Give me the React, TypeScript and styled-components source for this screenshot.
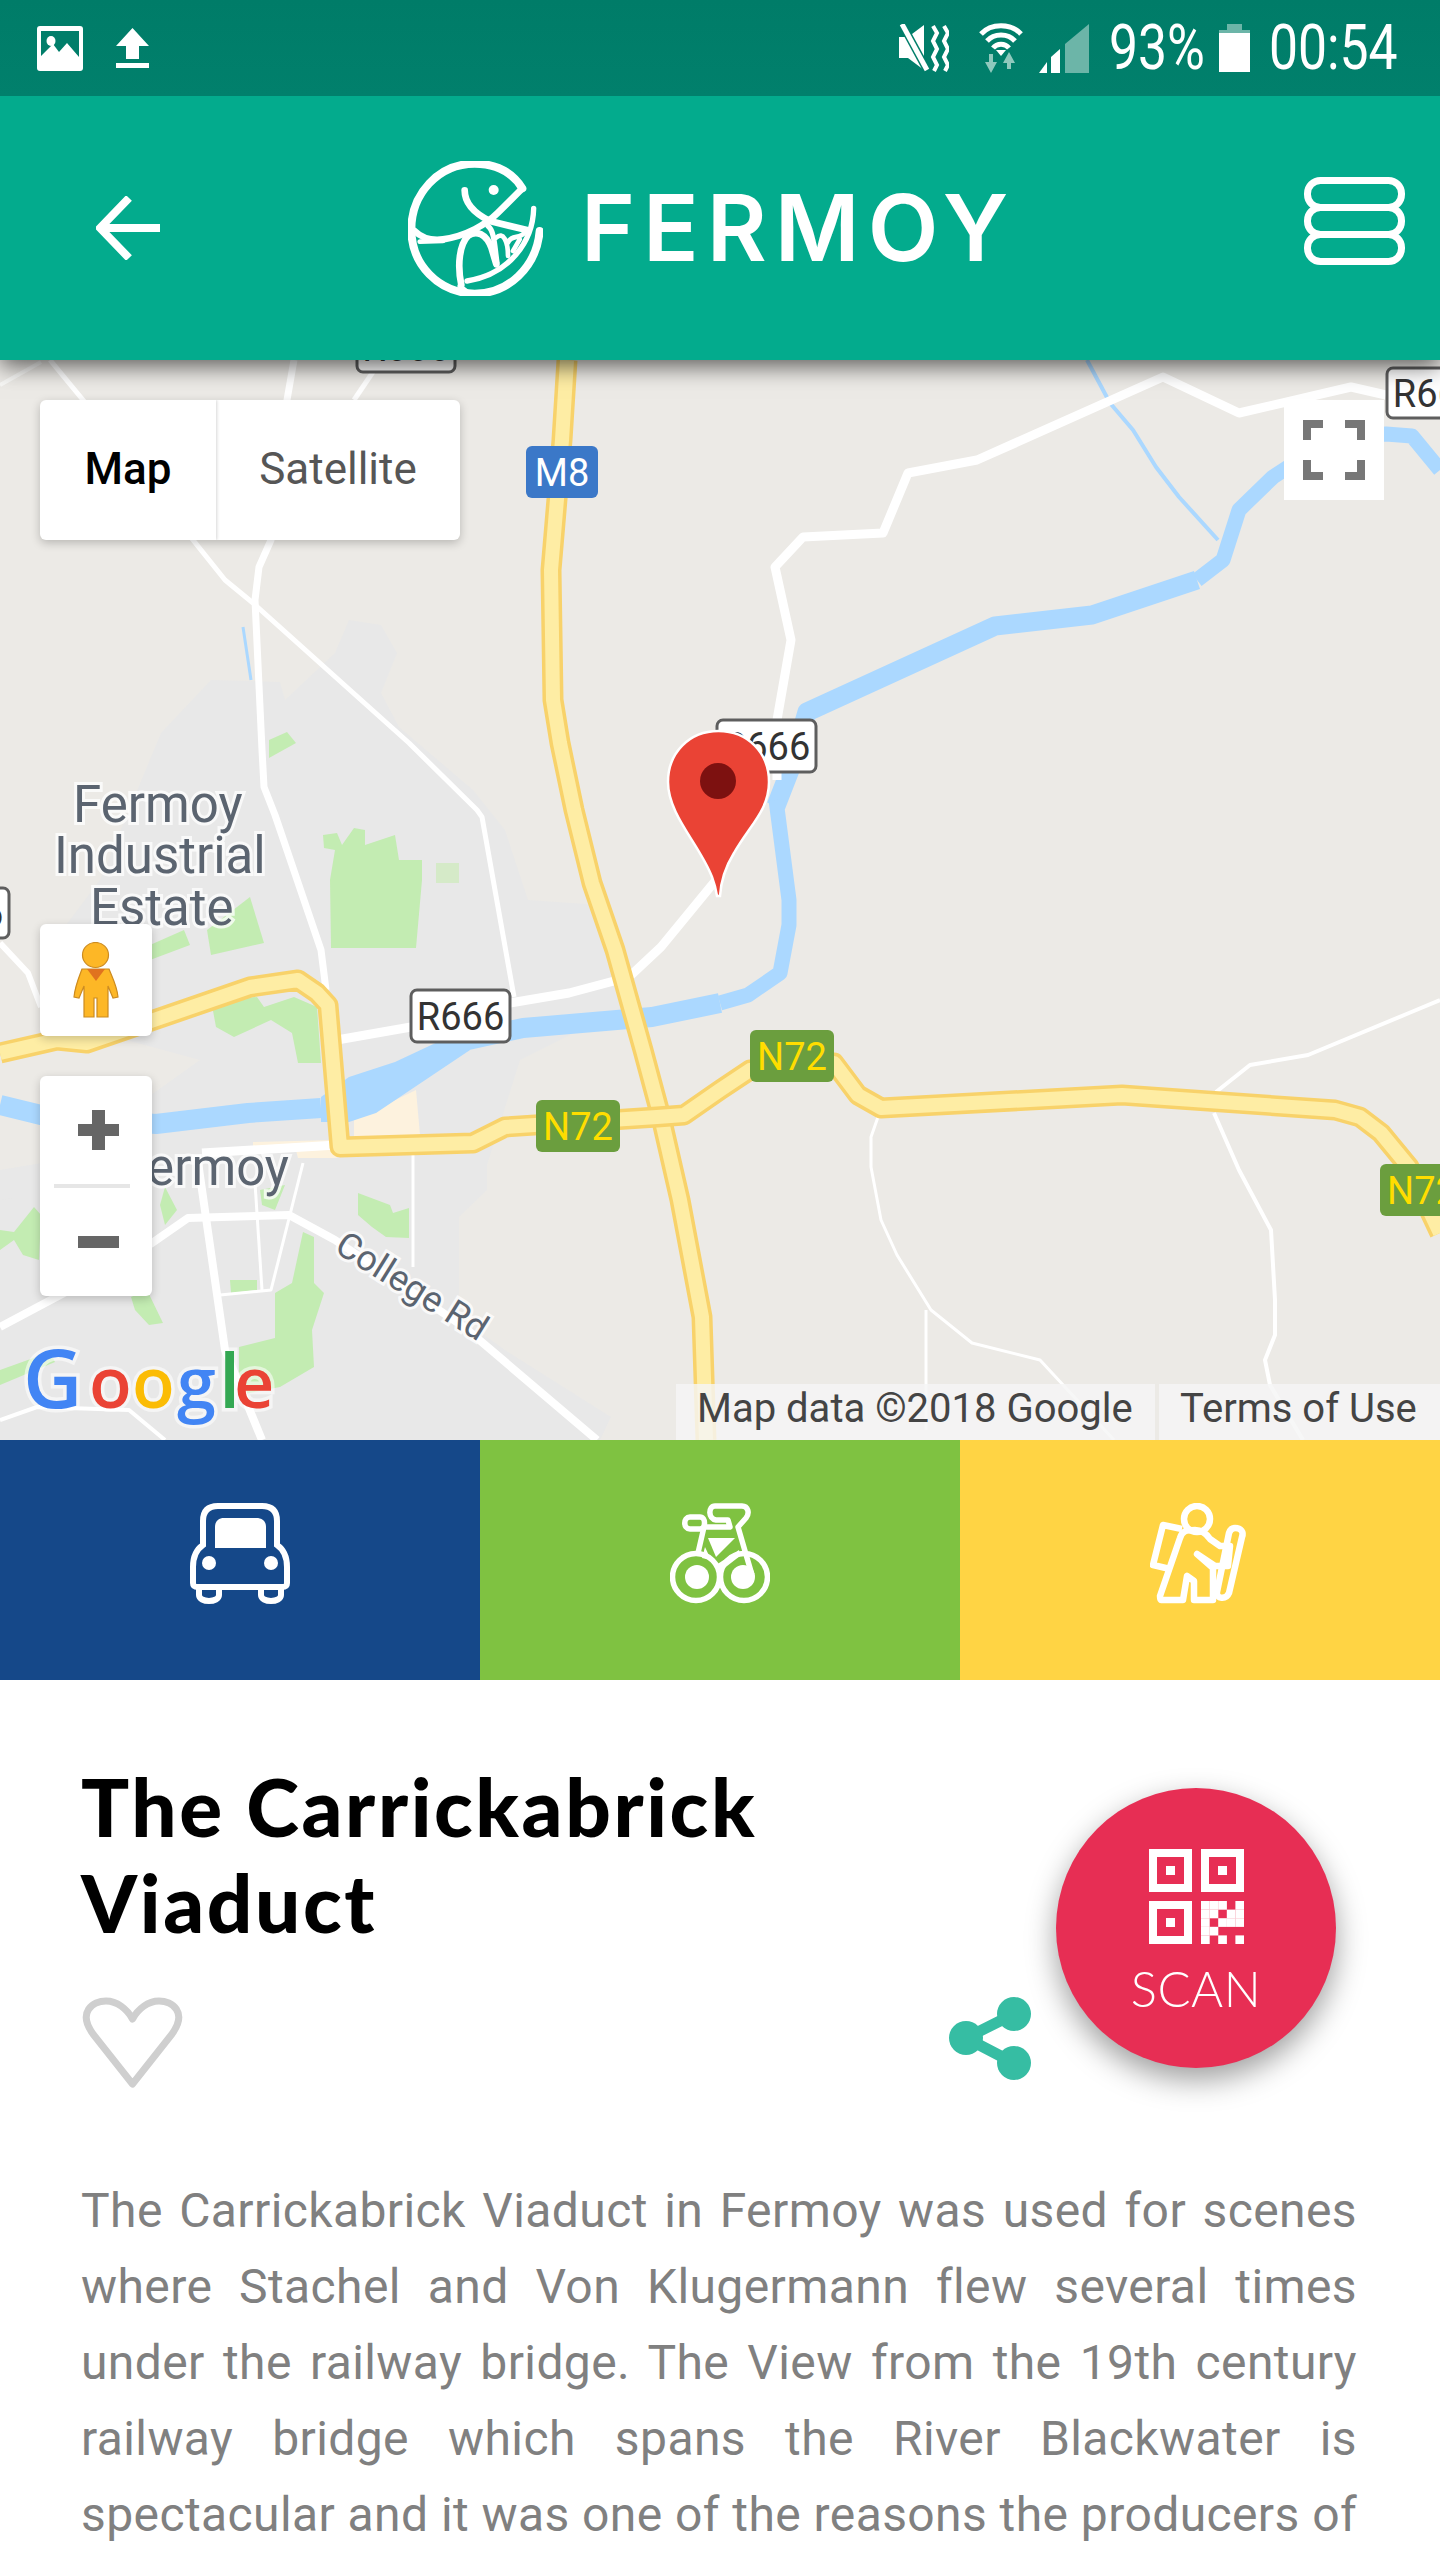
import React from "react";
import styled, { createGlobalStyle } from "styled-components";

const Global = createGlobalStyle`
  html, body { margin: 0; padding: 0; background: #fff; }
  body { font-family: Roboto, "Liberation Sans", sans-serif; }
`;

const Page = styled.div`
  width: 1440px;
  height: 2560px;
  overflow: hidden;
  background: #fff;
`;

const StatusBar = styled.div`
  height: 96px;
  background: linear-gradient(#007c68, #01806c);
  display: flex;
  align-items: center;
  padding: 0 42px 0 37px;
  color: #fff;
  position: relative;
  z-index: 3;
`;
const StatusLeft = styled.div`
  display: flex;
  align-items: center;
  gap: 33px;
`;
const StatusRight = styled.div`
  margin-left: auto;
  display: flex;
  align-items: center;
`;
const StatusSlot = styled.div<{ $gap?: number }>`
  margin-left: ${(p) => p.$gap ?? 0}px;
`;
const StatusText = styled.span<{ $w: number }>`
  display: block;
  width: ${(p) => p.$w}px;
  font: 400 63px/60px Roboto, sans-serif;
  white-space: nowrap;
  transform: scaleX(0.82);
  transform-origin: left center;
`;
const Glyph = styled.svg`
  display: block;
  flex: none;
`;

const Header = styled.header`
  height: 264px;
  background: #03ab8d;
  display: flex;
  align-items: center;
  padding: 0 35px 0 96px;
  position: relative;
  z-index: 2;
  box-shadow: 0 6px 22px rgba(0, 0, 0, 0.62);
`;
const Brand = styled.div`
  display: flex;
  align-items: center;
  gap: 38px;
  margin-left: 248px;
`;
const BrandName = styled.span`
  font: 600 92px/92px Inter, sans-serif;
  letter-spacing: 8px;
  color: #fff;
`;
const MenuSlot = styled.div`
  margin-left: auto;
  margin-bottom: 14px;
`;

const MapArea = styled.section`
  position: relative;
  height: 1080px;
  overflow: hidden;
  background: #eceae6;
`;
const MapDrawing = styled.svg`
  display: block;
`;
const PlaceLabel = styled.text<{ $size?: number }>`
  font: 400 ${(p) => p.$size ?? 51}px Roboto, sans-serif;
  fill: #5b6470;
  stroke: rgba(255, 255, 255, 0.75);
  stroke-width: 6px;
  paint-order: stroke;
`;
const ShieldText = styled.text`
  font: 400 38px Roboto, sans-serif;
  text-anchor: middle;
`;
const GoogleLetter = styled.text<{ $size: number }>`
  font: 600 ${(p) => p.$size}px "Open Sans", sans-serif;
  stroke: rgba(255, 255, 255, 0.55);
  stroke-width: 7px;
  paint-order: stroke;
`;

const TypeSwitch = styled.div`
  position: absolute;
  left: 40px;
  top: 40px;
  width: 420px;
  height: 140px;
  display: flex;
  background: #fff;
  border-radius: 6px;
  box-shadow: 0 3px 10px rgba(0, 0, 0, 0.22);
  overflow: hidden;
`;
const TypeOption = styled.div<{ $active?: boolean; $w: number }>`
  width: ${(p) => p.$w}px;
  display: flex;
  align-items: center;
  justify-content: center;
  padding-bottom: 3px;
  box-sizing: border-box;
  font: ${(p) => (p.$active ? 500 : 400)} 44px Roboto, sans-serif;
  color: ${(p) => (p.$active ? "#000" : "#565656")};
  box-shadow: ${(p) => (p.$active ? "1px 0 3px rgba(0,0,0,.16)" : "none")};
`;
const FullscreenButton = styled.div`
  position: absolute;
  left: 1284px;
  top: 40px;
  width: 100px;
  height: 100px;
  background: #fff;
  display: flex;
  align-items: center;
  justify-content: center;
`;
const RailColumn = styled.div`
  position: absolute;
  left: 40px;
  top: 564px;
  width: 112px;
  display: flex;
  flex-direction: column;
  gap: 40px;
`;
const RailCard = styled.div`
  background: #fff;
  border-radius: 6px;
  box-shadow: 0 3px 10px rgba(0, 0, 0, 0.2);
`;
const PegmanCard = styled(RailCard)`
  height: 112px;
  display: flex;
  align-items: center;
  justify-content: center;
`;
const ZoomCard = styled(RailCard)`
  height: 220px;
  display: flex;
  flex-direction: column;
  align-items: center;
`;
const ZoomCell = styled.div`
  height: 108px;
  width: 100%;
  display: flex;
  align-items: center;
  justify-content: center;
  padding-left: 4px;
  box-sizing: border-box;
`;
const ZoomRule = styled.div`
  width: 76px;
  height: 4px;
  background: #e6e6e6;
  margin-left: -8px;
`;
const Attribution = styled.div`
  position: absolute;
  right: 0;
  bottom: 0;
  height: 56px;
  display: flex;
  gap: 4px;
`;
const AttributionItem = styled.div<{ $w: number; $pad: number }>`
  width: ${(p) => p.$w}px;
  box-sizing: border-box;
  padding-left: ${(p) => p.$pad}px;
  background: rgba(245, 245, 245, 0.82);
  font: 400 40px/50px Roboto, sans-serif;
  color: #444;
  white-space: nowrap;
`;

const Transport = styled.nav`
  display: grid;
  grid-template-columns: repeat(3, 480px);
  height: 240px;
`;
const TransportCell = styled.div<{ $bg: string }>`
  background: ${(p) => p.$bg};
  display: flex;
  align-items: center;
  justify-content: center;
  padding-bottom: 13px;
  box-sizing: border-box;
`;

const Detail = styled.article`
  position: relative;
  padding: 78px 80px 0 81px;
`;
const Title = styled.h1`
  margin: 0;
  width: 780px;
  font: 900 80px/96px Lato, sans-serif;
  letter-spacing: 2.6px;
  color: #000;
`;
const Actions = styled.div`
  display: flex;
  align-items: flex-start;
  margin-top: 47px;
  width: 951px;
  justify-content: space-between;
  margin-left: -1px;
`;
const ScanButton = styled.div`
  position: absolute;
  left: 1056px;
  top: 108px;
  width: 280px;
  height: 280px;
  border-radius: 50%;
  background: #e72e54;
  box-shadow: 0 12px 30px rgba(0, 0, 0, 0.38);
  color: #fff;
  display: flex;
  flex-direction: column;
  align-items: center;
  padding-top: 61px;
  box-sizing: border-box;
`;
const ScanLabel = styled.span`
  font: 300 49px/50px Lato, sans-serif;
  margin-top: 19px;
  letter-spacing: 0.5px;
`;
const Body = styled.p`
  margin: 85px 0 0;
  width: 1276px;
  font: 400 48px/76px Roboto, sans-serif;
  letter-spacing: 0.4px;
  color: #808080;
  text-align: justify;
  text-align-last: justify;
`;

const Road = ({ d, w = 8, c = "#fff", o }: { d: string; w?: number; c?: string; o?: number }) => (
  <path d={d} fill="none" stroke={c} strokeWidth={w} strokeLinejoin="round" opacity={o} />
);

const Highway = ({ d }: { d: string }) => (
  <>
    <path d={d} fill="none" stroke="#f8d26a" strokeWidth={21} strokeLinejoin="round" />
    <path d={d} fill="none" stroke="#feeda4" strokeWidth={14} strokeLinejoin="round" />
  </>
);

const Area = ({ p, c }: { p: string; c: string }) => <polygon points={p} fill={c} />;

const Shield = ({ x, y, w, h = 52, t, variant }: { x: number; y: number; w: number; h?: number; t: string; variant: "r" | "m" | "n" }) => {
  const fill = variant === "r" ? "#fff" : variant === "m" ? "#3b78c8" : "#6b9e3e";
  const text = variant === "r" ? "#333" : variant === "m" ? "#fff" : "#ffdd00";
  return (
    <g>
      <rect
        x={x}
        y={y}
        width={w}
        height={h}
        rx={6}
        fill={fill}
        stroke={variant === "r" ? "#5e5e5e" : "none"}
        strokeWidth={variant === "r" ? 3 : 0}
      />
      <ShieldText x={x + w / 2} y={y + h / 2 + 14} fill={text} fontWeight={variant === "r" ? 400 : 500}>
        {t}
      </ShieldText>
    </g>
  );
};

const GREEN = "#c3ecb2";
const WATER = "#abd8ff";

const MapArt = () => (
  <MapDrawing width={1440} height={1080} viewBox="0 360 1440 1080">
    <rect x={0} y={360} width={1440} height={1080} fill="#eceae6" />
    <Area
      c="#e8e8e8"
      p="161,733 211,680 280,682 285,700 335,653 349,620 381,625 397,653 381,693 399,727 473,790 505,830 528,900 600,905 625,960 640,1000 520,1060 487,1165 487,1190 459,1217 459,1317 505,1350 611,1417 600,1440 300,1440 285,1390 399,1353 200,1440 0,1440 0,1170 60,1160 200,1060 90,1030 40,960 100,880"
    />
    <Area c="#e8e8e8" p="0,1200 300,1150 300,1440 0,1440" />
    <Area c={GREEN} p="269,740 287,732 296,743 269,758" />
    <Area c={GREEN} p="323,835 337,833 342,845 354,828 365,830 365,845 395,835 399,860 422,860 422,880 416,948 331,948 330,880 335,850 324,848" />
    <Area c="#d5eac8" p="436,863 459,863 459,883 436,883" />
    <Area c={GREEN} p="207,930 250,897 264,943 211,955" />
    <Area c={GREEN} p="150,945 184,930 190,945 150,960" />
    <Area c={GREEN} p="211,1000 257,997 264,1007 294,997 317,1007 321,1063 298,1063 292,1033 271,1020 234,1037 216,1027" />
    <Area c="#fdf2de" p="354,1120 416,1090 420,1135 354,1143" />
    <Area c="#fdf2de" p="253,1142 335,1140 337,1158 298,1158 296,1150 253,1150" />
    <Area c={GREEN} p="358,1193 390,1205 393,1213 409,1208 409,1238 386,1237 372,1227 358,1215" />
    <Area c={GREEN} p="303,1232 314,1237 314,1283 324,1293 312,1330 314,1367 280,1387 239,1395 239,1347 275,1338 275,1293 292,1283" />
    <Area c={GREEN} p="230,1280 257,1280 257,1290 231,1293" />
    <Area c={GREEN} p="131,1297 147,1290 163,1323 149,1325 135,1310" />
    <Area c={GREEN} p="0,1230 14,1232 34,1207 41,1215 39,1260 23,1255 14,1240 0,1250" />
    <Area c={GREEN} p="165,1187 177,1210 165,1225 160,1205" />
    <Area c={GREEN} p="260,1190 285,1185 275,1210 262,1205" />
    <Area c={GREEN} p="0,1370 50,1352 55,1362 0,1385" />

    <Road c={WATER} w={4} d="M1087 360 L1110 403 L1133 430 L1156 467 L1179 497 L1218 540" />
    <Road c={WATER} w={3} d="M243 627 L251 680" />
    <Road c={WATER} w={15} d="M1440 470 L1412 436 L1386 434 L1330 440 L1273 477 L1239 510 L1223 560 L1197 580" />
    <Road c={WATER} w={19} d="M1197 580 L1092 615 L995 626 L807 712 L790 770 L776 806" />
    <Road c={WATER} w={15} d="M776 800 L789 900 L789 925 L780 973 L748 995 L720 1003" />
    <Road c={WATER} w={20} d="M720 1003 L652 1017 L523 1028 L459 1042" />
    <Road c={WATER} w={20} d="M321 1108 L248 1113 L156 1124 L41 1115 L0 1105" />
    <polygon points="459,1032 395,1062 349,1077 321,1097 321,1122 349,1122 376,1113 470,1050" fill={WATER} />

    <Road w={9} d="M1386 395 L1351 387 L1239 413 L1163 377 L977 460 L908 473 L883 533 L803 537 L775 567 L791 640 L777 720 L777 780" />
    <Road w={9} d="M716 880 L661 947 L629 977 L569 993 L510 1003 L411 1027 L337 1040" />
    <Road w={5} d="M50 360 L83 400 L193 540 L225 580 L253 603 L409 743 L477 810 L482 817 L514 997" />
    <Road w={7} d="M294 360 L287 400 L271 540 L259 567 L255 600 L262 750 L264 787 L275 815 L321 950 L326 990" />
    <Road w={5} d="M381 360 L354 400" />
    <Road w={4} d="M0 385 L41 362" o={0.6} />
    <Road w={6} d="M0 943 L28 973 L41 1007" />
    <Road w={9} d="M202 1153 L337 1145" />
    <Road w={8} d="M0 1327 L64 1293 L152 1243 L188 1218 L289 1215 L335 1240 L464 1327 L597 1440" />
    <Road w={8} d="M197 1155 L225 1350 L262 1440" />
    <Road w={3} d="M255 1183 L262 1290" />
    <Road w={3} d="M303 1163 L271 1290 L220 1295" />
    <Road w={3} d="M413 1155 L413 1267" />
    <Road w={4} d="M0 1420 L37 1407 L129 1410 L165 1440" />
    <Road w={3} d="M878 1117 L871 1137 L871 1167 L881 1220 L897 1255 L931 1310 L972 1343 L1040 1360 L1114 1440" />
    <Road w={3} d="M926 1310 L926 1430" />
    <Road w={4} d="M1216 1092 L1250 1065 L1308 1055 L1409 1013 L1440 1000" />
    <Road w={4} d="M1214 1113 L1239 1170 L1271 1230 L1275 1300 L1275 1335 L1265 1360 L1270 1385 L1303 1440" />

    <Highway d="M567 360 L562 440 L551 570 L553 700 L560 743 L574 810 L592 883 L615 950 L643 1050 L661 1117 L680 1200 L702 1317 L706 1440" />
    <Highway d="M0 1053 L57 1040 L87 1043 L250 987 L298 980 L317 993 L328 1005 L340 1147 L473 1143 L505 1127 L657 1117 L684 1115 L720 1090 L750 1070 L834 1063 L858 1095 L881 1108 L1122 1095 L1335 1110 L1360 1117 L1381 1133 L1409 1167 L1440 1233" />

    <PlaceLabel x={73} y={822}>Fermoy</PlaceLabel>
    <PlaceLabel x={54} y={873}>Industrial</PlaceLabel>
    <PlaceLabel x={90} y={925}>Estate</PlaceLabel>
    <PlaceLabel x={289} y={1185} textAnchor="end">Fermoy</PlaceLabel>
    <PlaceLabel $size={36} transform="translate(333 1251) rotate(32)">College Rd</PlaceLabel>

    <Shield x={411} y={990} w={99} t="R666" variant="r" />
    <Shield x={717} y={720} w={99} t="R666" variant="r" />
    <Shield x={1387} y={368} w={99} h={50} t="R666" variant="r" />
    <Shield x={-90} y={888} w={99} h={50} t="R666" variant="r" />
    <Shield x={357} y={322} w={98} h={50} t="R666" variant="r" />
    <Shield x={526} y={446} w={72} t="M8" variant="m" />
    <Shield x={536} y={1100} w={84} t="N72" variant="n" />
    <Shield x={750} y={1030} w={84} t="N72" variant="n" />
    <Shield x={1380} y={1164} w={84} t="N72" variant="n" />

    <path
      d="M718.5 731 C689 731 668 753 668 782 C668 815 700 845 712 877 C715 885 716 890 717 896 L720 896 C721 880 726 866 734 853 C750 825 769 810 769 782 C769 753 748 731 718.5 731Z"
      fill="#ea4335"
      stroke="#fff"
      strokeWidth={2.5}
    />
    <ellipse cx={718} cy={781} rx={18} ry={18} fill="#7d1110" />

    <GoogleLetter $size={82} x={23} y={1408} fill="#4285f4">G</GoogleLetter>
    <GoogleLetter $size={70} x={89} y={1408} fill="#ea4335">o</GoogleLetter>
    <GoogleLetter $size={70} x={132} y={1408} fill="#fbbc05">o</GoogleLetter>
    <GoogleLetter $size={70} x={177} y={1408} fill="#4285f4">g</GoogleLetter>
    <GoogleLetter $size={76} x={219} y={1408} fill="#34a853">l</GoogleLetter>
    <GoogleLetter $size={70} x={234} y={1408} fill="#ea4335">e</GoogleLetter>
  </MapDrawing>
);

const ImageIcon = () => (
  <Glyph width={46} height={45} viewBox="0 0 46 45">
    <rect width={46} height={45} rx={3} fill="#fff" />
    <rect x={4} y={5} width={38} height={29} fill="#017e6a" />
    <ellipse cx={14} cy={15} rx={4.5} ry={5} fill="#fff" />
    <path d="M4 34 L4 30 L16 18 L22 26 L30 17 L42 31 L42 34 Z" fill="#fff" />
  </Glyph>
);

const UploadIcon = () => (
  <Glyph width={33} height={40} viewBox="0 0 33 40">
    <path d="M16.5 0 L33 18 L23 18 L23 31 L10 31 L10 18 L0 18 Z" fill="#fff" />
    <rect y={35} width={33} height={5} fill="#fff" />
  </Glyph>
);

const MuteIcon = () => (
  <Glyph width={50} height={48} viewBox="0 0 50 48">
    <polygon points="0,13 9,13 25,1 25,46 9,34 0,34" fill="#fff" />
    <path d="M3 0 L28 46" stroke="#017e6a" strokeWidth={8} />
    <path d="M3 0 L28 46" stroke="#fff" strokeWidth={5} />
    <path d="M34 2 L38 9 L34 17 L38 25 L34 33 L38 41 L35 47" fill="none" stroke="#fff" strokeWidth={4} />
    <path d="M45 2 L49 9 L45 17 L49 25 L45 33 L49 41 L46 47" fill="none" stroke="#fff" strokeWidth={4} />
  </Glyph>
);

const WifiIcon = () => (
  <Glyph width={44} height={50} viewBox="0 0 44 50">
    <g fill="none" stroke="#fff" strokeWidth={5}>
      <path d="M2 11 C12 0 32 0 42 11" />
      <path d="M8 18 C15 10 29 10 36 18" />
      <path d="M14 25 C18 20 26 20 30 25" />
    </g>
    <polygon points="17,27 27,27 22,33" fill="#fff" />
    <g fill="#8fc9bd">
      <polygon points="12,50 6,39 10,39 10,31 14,31 14,39 18,39" />
      <polygon points="30,29 36,40 32,40 32,46 28,46 28,40 24,40" />
    </g>
  </Glyph>
);

const SignalIcon = () => (
  <Glyph width={50} height={49} viewBox="0 0 50 49">
    <polygon points="26,49 26,20 50,0 50,49" fill="#6cb5a8" />
    <polygon points="0,49 8,38 8,49" fill="#fff" />
    <polygon points="12,49 12,33 21,25 21,49" fill="#fff" />
  </Glyph>
);

const BatteryIcon = () => (
  <Glyph width={31} height={48} viewBox="0 0 31 48">
    <rect x={8} width={15} height={7} fill="#6cb5a8" />
    <rect y={6} width={31} height={3} fill="#6cb5a8" />
    <rect y={9} width={31} height={39} fill="#fff" />
  </Glyph>
);

const BackArrow = () => (
  <Glyph width={64} height={64} viewBox="0 0 64 64">
    <path d="M64 32 H5 M33 2 L4 32 L33 62" fill="none" stroke="#fff" strokeWidth={8} />
  </Glyph>
);

const FishLogo = () => (
  <Glyph width={135} height={135} viewBox="85 90 405 405">
    <g fill="none" stroke="#fff" strokeWidth={20} strokeLinecap="round" strokeLinejoin="round">
      <path strokeWidth={24} d="M428 172 C395 120 345 98 285 98 C175 98 95 190 95 295 C95 400 175 485 285 488 C385 488 470 410 480 300" />
      <path strokeWidth={16} d="M462 232 C460 330 390 430 262 450" />
      <path d="M428 172 L355 245 C320 280 260 315 190 325 C150 330 125 320 105 300" />
      <path d="M255 178 C255 215 280 245 330 270 L445 298" />
      <path strokeWidth={14} d="M120 332 L190 330" />
      <path d="M245 462 C232 400 240 340 265 315 C290 295 320 310 335 350 L350 400" />
      <path strokeWidth={16} d="M325 285 C345 300 345 350 352 395" />
      <path strokeWidth={14} d="M350 320 C370 300 385 330 385 375 M385 335 C395 310 420 325 435 305 M400 360 L420 325" />
      <path strokeWidth={14} d="M240 465 L262 482" />
    </g>
    <circle cx={342} cy={177} r={15} fill="#fff" />
  </Glyph>
);

const MenuIcon = () => (
  <Glyph width={101} height={88} viewBox="0 0 101 88">
    <g fill="none" stroke="#fff" strokeWidth={7}>
      <rect x={3.5} y={3.5} width={94} height={27} rx={13} />
      <rect x={3.5} y={30.5} width={94} height={27} rx={13} />
      <rect x={3.5} y={57.5} width={94} height={27} rx={13} />
    </g>
  </Glyph>
);

const ExpandIcon = () => (
  <Glyph width={62} height={60} viewBox="0 0 62 60">
    <path
      d="M4 20 V4 H20 M42 4 H58 V20 M4 40 V56 H20 M42 56 H58 V40"
      fill="none"
      stroke="#777"
      strokeWidth={8}
    />
  </Glyph>
);

const Pegman = () => (
  <Glyph width={46} height={76} viewBox="0 0 46 76">
    <g fill="#fdb726" stroke="#cc8b20" strokeWidth={1.2}>
      <ellipse cx={22.5} cy={13} rx={13} ry={12.5} />
      <path d="M9 27 L36 27 C39 35 44 44 45 55 L40 56 L35 44 L35 75 L24 75 L24 56 L21 56 L21 75 L11 75 L11 44 L6 56 L1 55 C2 44 6 35 9 27Z" />
    </g>
    <polygon points="14,27 32,27 23,39" fill="#e0731f" />
  </Glyph>
);

const PlusIcon = () => (
  <Glyph width={41} height={40} viewBox="0 0 41 40">
    <path d="M14 0 H27 V14 H41 V26 H27 V40 H14 V26 H0 V14 H14Z" fill="#666" />
  </Glyph>
);
const MinusIcon = () => (
  <Glyph width={41} height={12} viewBox="0 0 41 12">
    <rect width={41} height={12} fill="#666" />
  </Glyph>
);

const CarIcon = () => (
  <Glyph width={100} height={101} viewBox="0 0 100 101">
    <g fill="none" stroke="#fff" strokeWidth={6}>
      <path d="M13 42 V18 C13 7 19 3 28 3 H72 C81 3 87 7 87 18 V42 C93 46 97 54 97 64 V80 C97 83 95 84 92 84 H8 C5 84 3 83 3 80 V64 C3 54 7 46 13 42Z" />
      <path d="M9 84 V92 C9 100 29 100 29 92 V84" />
      <path d="M71 84 V92 C71 100 91 100 91 92 V84" />
    </g>
    <path d="M25 45 V24 C25 18 29 15 34 15 H66 C72 15 76 18 76 24 V45 Z" fill="#fff" />
    <ellipse cx={19} cy={60} rx={7} ry={7} fill="#fff" />
    <ellipse cx={81} cy={60} rx={7} ry={7} fill="#fff" />
  </Glyph>
);

const BikeIcon = () => (
  <Glyph width={100} height={101} viewBox="0 0 100 101">
    <g fill="none" stroke="#fff" strokeWidth={5.5} strokeLinejoin="round">
      <circle cx={26} cy={74} r={23.5} />
      <circle cx={74} cy={74} r={23.5} />
      <path d="M20 14 H30 C36 14 36 26 30 26 H20 C13 26 13 14 20 14Z" />
      <path d="M45 3 H72 C78 3 80 10 76 15 L68 24 L82 72" />
      <path d="M45 3 C38 3 38 16 46 17 H58 L60 24 H34 L28 50" />
    </g>
    <circle cx={27} cy={74} r={12} fill="#fff" />
    <circle cx={73} cy={74} r={12} fill="#fff" />
    <polygon points="38,35 65,35 46,54" fill="#fff" />
    <polygon points="35,44 32,55 41,57" fill="#fff" />
    <polygon points="69,47 46,62 48,70 70,53" fill="#fff" />
  </Glyph>
);

const HikerIcon = () => (
  <Glyph width={100} height={101} viewBox="0 0 100 101">
    <g fill="none" stroke="#fff" strokeWidth={6.5} strokeLinejoin="round">
      <circle cx={47} cy={16} r={13} />
      <path d="M32 26 L13 22 L3 62 L20 66" />
      <path d="M30 35 C32 28 36 27 45 27 C52 27 56 30 60 36 L70 43 H80 L78 63 H65 L47 51 L63 65 V97 H44 V78 L37 73 L33 97 H11 C10 97 10 95 10 93 Z" />
      <path d="M85 25 C91 25 94 29 92 34 L79 90 C76 97 66 96 67 89 L79 30 C80 27 82 25 85 25Z" />
    </g>
  </Glyph>
);

const HeartIcon = () => (
  <Glyph width={105} height={91} viewBox="0 0 105 91">
    <path
      d="M52.5 87 L13 37 C-3 15 13 4 26 4 C37 4 47 12 52.5 22 C58 12 68 4 79 4 C92 4 108 15 92 37 Z"
      fill="none"
      stroke="#cfcfcf"
      strokeWidth={7}
      strokeLinejoin="round"
    />
  </Glyph>
);

const ShareIcon = () => (
  <Glyph width={82} height={83} viewBox="0 0 82 83">
    <path d="M65 17 L17 41 L65 66" fill="none" stroke="#36bda3" strokeWidth={11} />
    <circle cx={65} cy={17} r={17} fill="#36bda3" />
    <circle cx={17} cy={41} r={17} fill="#36bda3" />
    <circle cx={65} cy={66} r={17} fill="#36bda3" />
  </Glyph>
);

const QR_CELLS = [
  [1, 1, 1, 0, 1],
  [1, 1, 0, 1, 1],
  [1, 0, 1, 1, 1],
  [1, 1, 0, 0, 0],
  [1, 0, 1, 0, 1],
];

const QrFinder = ({ x, y }: { x: number; y: number }) => (
  <>
    <rect x={x + 4} y={y + 4} width={35} height={35} fill="none" stroke="#fff" strokeWidth={8} />
    <rect x={x + 17} y={y + 17} width={9} height={9} fill="#fff" />
  </>
);

const QrIcon = () => (
  <Glyph width={95} height={95} viewBox="0 0 95 95">
    <QrFinder x={0} y={0} />
    <QrFinder x={52} y={0} />
    <QrFinder x={0} y={52} />
    {QR_CELLS.map((row, r) =>
      row.map((v, c) =>
        v ? <rect key={`${r}-${c}`} x={52 + c * 8.6} y={52 + r * 8.6} width={8.7} height={8.7} fill="#fff" /> : null
      )
    )}
  </Glyph>
);

export default function App() {
  return (
    <Page>
      <Global />
      <StatusBar>
        <StatusLeft>
          <ImageIcon />
          <UploadIcon />
        </StatusLeft>
        <StatusRight>
          <StatusSlot><MuteIcon /></StatusSlot>
          <StatusSlot $gap={30}><WifiIcon /></StatusSlot>
          <StatusSlot $gap={16}><SignalIcon /></StatusSlot>
          <StatusSlot $gap={20}><StatusText $w={96}>93%</StatusText></StatusSlot>
          <StatusSlot $gap={14}><BatteryIcon /></StatusSlot>
          <StatusSlot $gap={19}><StatusText $w={129}>00:54</StatusText></StatusSlot>
        </StatusRight>
      </StatusBar>
      <Header>
        <BackArrow />
        <Brand>
          <FishLogo />
          <BrandName>FERMOY</BrandName>
        </Brand>
        <MenuSlot>
          <MenuIcon />
        </MenuSlot>
      </Header>
      <MapArea>
        <MapArt />
        <TypeSwitch>
          <TypeOption $active $w={176}>Map</TypeOption>
          <TypeOption $w={244}>Satellite</TypeOption>
        </TypeSwitch>
        <FullscreenButton>
          <ExpandIcon />
        </FullscreenButton>
        <RailColumn>
          <PegmanCard>
            <Pegman />
          </PegmanCard>
          <ZoomCard>
            <ZoomCell>
              <PlusIcon />
            </ZoomCell>
            <ZoomRule />
            <ZoomCell>
              <MinusIcon />
            </ZoomCell>
          </ZoomCard>
        </RailColumn>
        <Attribution>
          <AttributionItem $w={479} $pad={21}>Map data ©2018 Google</AttributionItem>
          <AttributionItem $w={281} $pad={21}>Terms of Use</AttributionItem>
        </Attribution>
      </MapArea>
      <Transport>
        <TransportCell $bg="#154889">
          <CarIcon />
        </TransportCell>
        <TransportCell $bg="#7fc241">
          <BikeIcon />
        </TransportCell>
        <TransportCell $bg="#ffd444">
          <HikerIcon />
        </TransportCell>
      </Transport>
      <Detail>
        <Title>The Carrickabrick Viaduct</Title>
        <Actions>
          <HeartIcon />
          <ShareIcon />
        </Actions>
        <ScanButton>
          <QrIcon />
          <ScanLabel>SCAN</ScanLabel>
        </ScanButton>
        <Body>
          The Carrickabrick Viaduct in Fermoy was used for scenes where Stachel and Von Klugermann flew several times
          under the railway bridge. The View from the 19th century railway bridge which spans the River Blackwater is
          spectacular and it was one of the reasons the producers of
        </Body>
      </Detail>
    </Page>
  );
}
